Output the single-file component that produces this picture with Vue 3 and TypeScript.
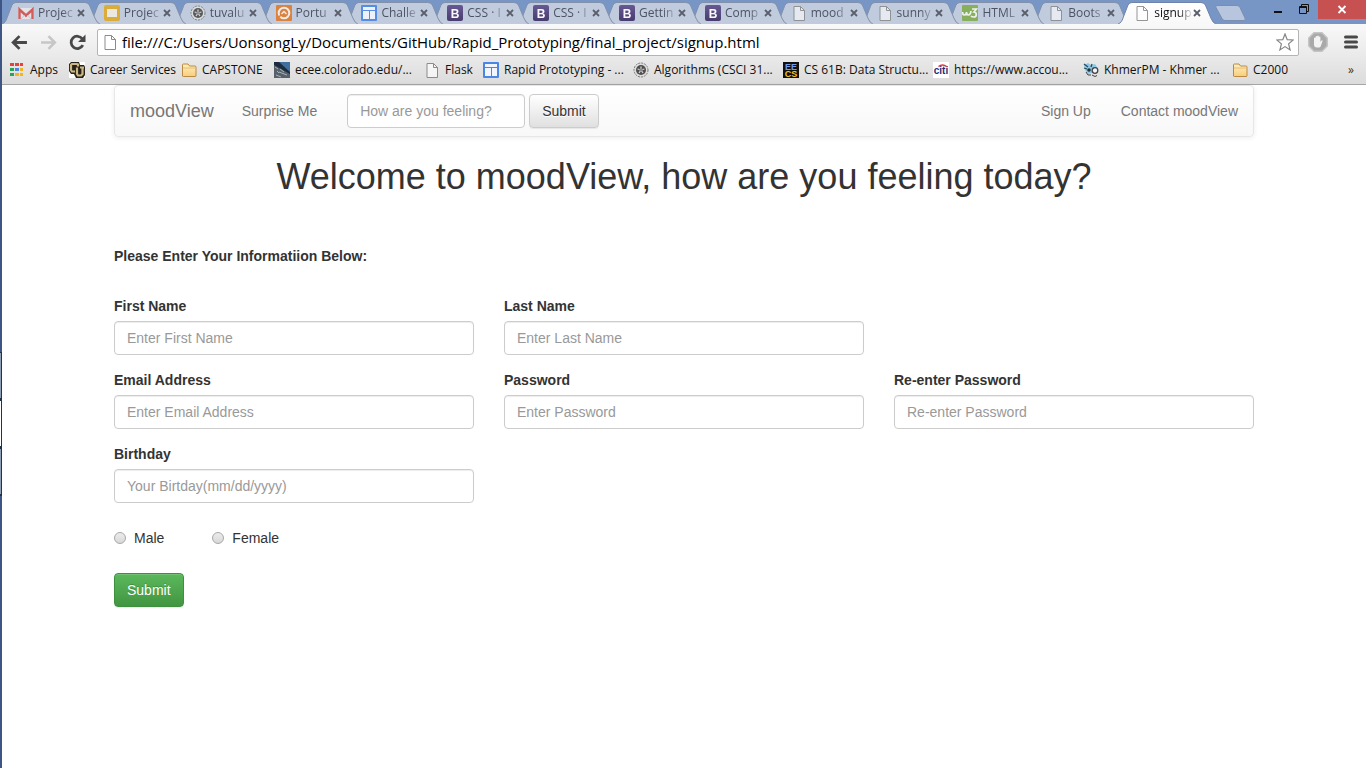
<script setup lang="ts">
import { ref } from 'vue'

interface Tab { icon: string; title: string; active?: boolean }
interface Bookmark { icon: string; label: string; width: number }
interface Field { id: string; label: string; hint: string; type: string }

const tabs: Tab[] = [
  { icon: 'gmail', title: 'Projec' },
  { icon: 'slides', title: 'Projec' },
  { icon: 'seal', title: 'tuvalu' },
  { icon: 'orange', title: 'Portu' },
  { icon: 'sites', title: 'Challe' },
  { icon: 'boot', title: 'CSS · I' },
  { icon: 'boot', title: 'CSS · I' },
  { icon: 'boot', title: 'Gettin' },
  { icon: 'boot', title: 'Comp' },
  { icon: 'page', title: 'mood' },
  { icon: 'page', title: 'sunny' },
  { icon: 'w3', title: 'HTML' },
  { icon: 'page', title: 'Boots' },
  { icon: 'page', title: 'signup', active: true },
]

const bookmarks: Bookmark[] = [
  { icon: 'apps', label: 'Apps', width: 60 },
  { icon: 'cu', label: 'Career Services', width: 112 },
  { icon: 'folder', label: 'CAPSTONE', width: 93 },
  { icon: 'photo', label: 'ecee.colorado.edu/...', width: 150 },
  { icon: 'page', label: 'Flask', width: 59 },
  { icon: 'sites', label: 'Rapid Prototyping - ...', width: 150 },
  { icon: 'seal', label: 'Algorithms (CSCI 31...', width: 150 },
  { icon: 'eecs', label: 'CS 61B: Data Structu...', width: 150 },
  { icon: 'citi', label: 'https://www.accou...', width: 150 },
  { icon: 'khmer', label: 'KhmerPM - Khmer ...', width: 149 },
  { icon: 'folder', label: 'C2000', width: 60 },
]

const rows: Field[][] = [
  [
    { id: 'first', label: 'First Name', hint: 'Enter First Name', type: 'text' },
    { id: 'last', label: 'Last Name', hint: 'Enter Last Name', type: 'text' },
  ],
  [
    { id: 'email', label: 'Email Address', hint: 'Enter Email Address', type: 'email' },
    { id: 'password', label: 'Password', hint: 'Enter Password', type: 'password' },
    { id: 'password2', label: 'Re-enter Password', hint: 'Re-enter Password', type: 'password' },
  ],
  [{ id: 'birthday', label: 'Birthday', hint: 'Your Birtday(mm/dd/yyyy)', type: 'text' }],
]

const url = ref('file:///C:/Users/UonsongLy/Documents/GitHub/Rapid_Prototyping/final_project/signup.html')
const gender = ref('')
</script>

<template>
  <div class="desktop">
    <svg class="gradients" aria-hidden="true">
      <defs>
        <linearGradient id="g-boot" x1="0" y1="0" x2="0" y2="1">
          <stop offset="0" stop-color="#5f4d8c" /><stop offset="1" stop-color="#3c2d63" />
        </linearGradient>
        <linearGradient id="g-folder" x1="0" y1="0" x2="0" y2="1">
          <stop offset="0" stop-color="#fff0c0" /><stop offset="1" stop-color="#f8cd7c" />
        </linearGradient>
        <linearGradient id="g-tab" x1="0" y1="0" x2="0" y2="1">
          <stop offset="0" stop-color="#ffffff" /><stop offset="1" stop-color="#f8f8f8" />
        </linearGradient>
      </defs>
    </svg>
    <svg class="sprite" aria-hidden="true">
      <symbol id="i-gmail" viewBox="0 0 16 16">
        <rect x="0" y="3" width="16" height="11" fill="#e8e6ea" />
        <path d="M1.500 14V4.500L8 10.500l6.500-6V14" fill="none" stroke="#d2504e" stroke-width="2.400" />
        <path d="M3 14l3.500-4M13 14l-3.500-4" stroke="#c8c6cc" fill="none" />
      </symbol>
      <symbol id="i-slides" viewBox="0 0 16 16">
        <rect width="16" height="16" rx="2" fill="#dda928" />
        <rect x="3" y="4" width="10" height="8" fill="#f0ece4" />
      </symbol>
      <symbol id="i-seal" viewBox="0 0 16 16">
        <circle cx="8" cy="8" r="7" fill="#ddd" stroke="#777" stroke-dasharray="2 1" />
        <circle cx="8" cy="8" r="5" fill="#4e4e4e" />
        <path d="M8 8V4.500M8 8l3.400-1M8 8l2 3M8 8l-2 3M8 8L4.600 7" stroke="#d5d5d5" stroke-width="1.300" />
        <circle cx="8" cy="8" r="1.800" fill="#888" />
      </symbol>
      <symbol id="i-orange" viewBox="0 0 16 16">
        <rect width="16" height="16" rx="1" fill="#e07b2e" />
        <circle cx="8" cy="8" r="5.300" fill="none" stroke="#f4efe9" stroke-width="2" />
        <path d="M5.500 9L8 6.500 10.500 9" fill="none" stroke="#f4efe9" stroke-width="1.500" />
        <path d="M2.500 12.500l3-3" stroke="#e07b2e" stroke-width="1.500" />
      </symbol>
      <symbol id="i-sites" viewBox="0 0 16 16">
        <rect width="16" height="16" rx="1" fill="#4a86e8" />
        <path d="M2 2h12v3H2zM2 6h6v8H2zM9 6h5v8H9z" fill="#f1f6fe" />
      </symbol>
      <symbol id="i-boot" viewBox="0 0 16 16">
        <rect width="16" height="16" rx="2" fill="url(#g-boot)" />
        <text x="8" y="12.500" text-anchor="middle" font-family="Liberation Sans, sans-serif" font-weight="bold" font-size="12" fill="#fff">B</text>
      </symbol>
      <symbol id="i-page" viewBox="0 0 16 16">
        <path d="M3 1.500h6.500l4 4v10H3z" fill="#fff" fill-opacity=".65" stroke="#8b8b8b" />
        <path d="M9.500 1.500v4h4" fill="none" stroke="#8b8b8b" />
      </symbol>
      <symbol id="i-w3" viewBox="0 0 16 16">
        <rect width="16" height="16" rx="1" fill="#82ad50" />
        <path d="M0.500 7q0 3 2 3t2-3q0 3 2 3t2.500-4M10 4h4.500l-2.500 3c3 0 3 5 0 5-1 0-2 0-3-1" fill="none" stroke="#f3f7ee" stroke-width="1.700" />
      </symbol>
      <symbol id="i-apps" viewBox="0 0 16 16">
        <path d="M1 1h4v3H1zM6 1h4v3H6zM11 1h3v3h-3z" fill="#e8433a" />
        <path d="M1 6h4v3H1zM1 11h4v3H1z" fill="#26a45a" />
        <path d="M6 6h4v3H6z" fill="#4a86e8" />
        <path d="M11 6h3v3h-3zM6 11h4v3H6zM11 11h3v3h-3z" fill="#f2b51d" />
      </symbol>
      <symbol id="i-cu" viewBox="0 0 16 16">
        <rect width="16" height="16" fill="#fff" />
        <path d="M2 0h8l1 3h4l1 2v8l-2 3H7l-2-4H2L0 9V2z" fill="#26221a" />
        <path d="M9 4.500V2.500L8 2H3L2 3v5l1 1.500h3M8 5.500v6.500l1 1.500h3l1.500-1.500V5.500M11 5.500h4" fill="none" stroke="#cdb885" stroke-width="2.200" />
      </symbol>
      <symbol id="i-folder" viewBox="0 0 16 16">
        <path d="M1.500 14V3q0-1 1-1H7l1.500 2h5.500q1 0 1 1v9q0 .5-1 .5H2.500q-1 0-1-.5z" fill="url(#g-folder)" stroke="#b98a43" />
        <path d="M2 6h12.500" stroke="#e8bd73" />
      </symbol>
      <symbol id="i-photo" viewBox="0 0 16 16">
        <rect width="16" height="16" fill="#1d2c3d" />
        <path d="M5 0h11v10z" fill="#416f9d" />
        <path d="M0 3l16 9v4H0z" fill="#56616b" />
        <path d="M1 5l3 2M5 10l8 3M2 13l5 2M6 7l4 3M3 9l2 2" stroke="#a9b2b8" />
      </symbol>
      <symbol id="i-eecs" viewBox="0 0 16 16">
        <rect width="16" height="16" fill="#10100e" />
        <text x="8" y="7.500" text-anchor="middle" font-family="Liberation Sans, sans-serif" font-weight="bold" font-size="9" fill="#6f9cf0">EE</text>
        <text x="8" y="15" text-anchor="middle" font-family="Liberation Sans, sans-serif" font-weight="bold" font-size="9" fill="#f4c51e">CS</text>
      </symbol>
      <symbol id="i-citi" viewBox="0 0 16 16">
        <rect width="16" height="16" fill="#fff" />
        <text x="8" y="12" text-anchor="middle" font-family="Liberation Sans, sans-serif" font-weight="bold" font-size="10" fill="#1c2e78">citi</text>
        <path d="M5.500 4.500q4-3 8 0" fill="none" stroke="#e02f35" stroke-width="1.500" />
      </symbol>
      <symbol id="i-khmer" viewBox="0 0 16 16">
        <path d="M1 3l4-2 3 2 4-1 2 3-1 3-4 3-4 1-3-4z" fill="#8ec8e6" />
        <path d="M1 2l4 3M1 6l3 1M9 2L8 5" stroke="#2c4a5c" stroke-width="1.300" />
        <circle cx="6" cy="8" r="1.800" fill="#222f3a" />
        <circle cx="12" cy="8.500" r="2.800" fill="#eef5f9" stroke="#444" stroke-width="1.300" />
        <path d="M3 10l2 3 3 0M9 13l3 1.500 2-1" stroke="#444" fill="none" />
      </symbol>
    </svg>

    <div class="edge" aria-hidden="true">
      <span class="seg gap"></span><span class="seg pane"></span><span class="seg lit"></span><span class="seg pane"></span>
    </div>

    <div class="window">
      <header class="titlebar">
        <nav class="tabs" aria-label="Open tabs">
          <div
            v-for="(tab, i) in tabs"
            :key="i"
            class="tab"
            :class="{ active: tab.active }"
            :style="{ zIndex: tab.active ? 30 : tabs.length - i }"
          >
            <svg class="tab-shape" viewBox="0 0 100 24" preserveAspectRatio="none">
              <path d="M0 24C3 23 4 21 5 18L10 5Q11.500 2.500 14 2.500H83Q86 2.500 87.500 5L93 18Q95 23 98 24" />
            </svg>
            <svg class="icon"><use :href="'#i-' + tab.icon" /></svg>
            <button class="tab-title" type="button">{{ tab.title }}</button>
            <button class="tab-close" type="button" aria-label="Close tab">
              <svg viewBox="0 0 8 8"><path d="M1 1l6 6M7 1L1 7" /></svg>
            </button>
          </div>
        </nav>
        <button class="new-tab" type="button" aria-label="New tab">
          <svg viewBox="0 0 34 18"><path d="M3 1.500H23Q25 1.500 26 3.500L31 14Q32 16.500 30 16.500H11Q9 16.500 8 14.500L2 3.500Q1 1.500 3 1.500Z" /></svg>
        </button>
        <div class="controls">
          <button type="button" aria-label="Minimize"><svg viewBox="0 0 12 20"><path d="M2 12h8" stroke="#111" stroke-width="2" /></svg></button>
          <button type="button" aria-label="Restore">
            <svg viewBox="0 0 12 20"><path d="M3.500 6V4.500h7v7H9" fill="none" stroke="#111" /><path d="M1.500 6.500h7v7h-7zM1.500 7.500h7" fill="none" stroke="#111" /></svg>
          </button>
          <button class="close" type="button" aria-label="Close"><svg viewBox="0 0 12 20"><path d="M2.500 6l7 7M9.500 6l-7 7" stroke="#fff" stroke-width="1.800" /></svg></button>
        </div>
      </header>

      <div class="toolbar">
        <button class="tool" type="button" aria-label="Back">
          <svg viewBox="0 0 16 16"><path d="M15 8H2.500M8 2L2 8l6 6" fill="none" stroke="#484848" stroke-width="2.600" /></svg>
        </button>
        <button class="tool" type="button" aria-label="Forward">
          <svg viewBox="0 0 16 16"><path d="M1 8h12.500M8 2l6 6-6 6" fill="none" stroke="#c6c6c6" stroke-width="2.400" /></svg>
        </button>
        <button class="tool" type="button" aria-label="Reload">
          <svg viewBox="0 0 16 16"><path d="M13 10.500A5.800 5.800 0 1 1 12.500 4.500" fill="none" stroke="#484848" stroke-width="2.600" /><path d="M15.500 0.500V7.500H8.500z" fill="#484848" /></svg>
        </button>
        <div class="omnibox">
          <svg class="icon"><use href="#i-page" /></svg>
          <input v-model="url" type="text" aria-label="Address" spellcheck="false" />
          <button class="star" type="button" aria-label="Bookmark this page">
            <svg viewBox="0 0 18 18"><path d="M9 1l2.200 5.600 6 .4-4.600 3.900 1.500 6L9 13.600l-5.100 3.300 1.500-6L.8 7l6-.4z" fill="#fff" stroke="#858585" stroke-width="1.200" /></svg>
          </button>
        </div>
        <button class="ext" type="button" aria-label="Ad blocker">
          <svg viewBox="0 0 20 20">
            <path d="M6 .8h8L19.200 6v8L14 19.200H6L.8 14V6z" fill="#a9a9a9" stroke="#c4c4c4" stroke-width="1.500" />
            <path d="M6 10V6q.8-1 1.600 0v3.500V4.500q.8-1 1.600 0v4.500V4q.8-1 1.600 0v5V5q.8-1 1.600 0v5l1-1.500q1.200-.5 1.200.5l-2 5.500q-.5 1-1.500 1H9q-3 0-3-3z" fill="#f3f3f3" />
          </svg>
        </button>
        <button class="menu" type="button" aria-label="Menu">
          <svg viewBox="0 0 14 14"><path d="M1.500 2h11M1.500 7h11M1.500 12h11" stroke="#484848" stroke-width="3" stroke-linecap="round" /></svg>
        </button>
      </div>

      <nav class="bookmarks" aria-label="Bookmarks">
        <a v-for="mark in bookmarks" :key="mark.label" href="#" :style="{ width: mark.width + 'px' }">
          <svg class="icon"><use :href="'#i-' + mark.icon" /></svg>
          <span>{{ mark.label }}</span>
        </a>
        <button class="more" type="button" aria-label="More bookmarks">»</button>
      </nav>

      <main class="page">
        <nav class="navbar" aria-label="Main">
          <a class="brand" href="#">moodView</a>
          <a href="#">Surprise Me</a>
          <form class="search" @submit.prevent>
            <input class="control" type="text" placeholder="How are you feeling?" aria-label="How are you feeling?" />
            <button class="btn btn-default" type="submit">Submit</button>
          </form>
          <div class="right">
            <a href="#">Sign Up</a>
            <a href="#">Contact moodView</a>
          </div>
        </nav>

        <h1>Welcome to moodView, how are you feeling today?</h1>

        <form class="signup" @submit.prevent>
          <p class="lead">Please Enter Your Informatiion Below:</p>
          <div v-for="(row, r) in rows" :key="r" class="row">
            <div v-for="field in row" :key="field.id" class="field">
              <label :for="field.id">{{ field.label }}</label>
              <input :id="field.id" class="control" :type="field.type" :placeholder="field.hint" />
            </div>
          </div>
          <div class="radios">
            <label><input v-model="gender" type="radio" name="gender" value="male" />Male</label>
            <label><input v-model="gender" type="radio" name="gender" value="female" />Female</label>
          </div>
          <button class="btn btn-success" type="submit">Submit</button>
        </form>
      </main>
    </div>
  </div>
</template>

<style>
body {
  margin: 0;
  background: #fff;
}
</style>

<style scoped>
* {
  box-sizing: border-box;
}
button {
  font: inherit;
  padding: 0;
  border: 0;
  background: none;
}
svg {
  display: block;
}
a {
  text-decoration: none;
}
.desktop {
  display: flex;
  min-height: 100vh;
  overflow: hidden;
}
.gradients {
  position: absolute;
  width: 0;
  height: 0;
}
.sprite {
  display: none;
}
.edge {
  width: 2px;
  flex: none;
  background: #3f5684;
}
.seg {
  display: block;
  height: 48px;
  border: solid #22314f;
  border-width: 1px 1px 2px 0;
}
.seg.gap {
  height: 352px;
  border: 0;
}
.seg.pane {
  background: #8f9fb4;
}
.seg.lit {
  background: #fff;
}
.window {
  flex: 1;
  min-width: 0;
}
.icon {
  width: 16px;
  height: 16px;
  flex: none;
}

.titlebar {
  display: flex;
  height: 24px;
  background: #7795c5;
  font: 12px/16px "Open Sans", "Noto Sans", sans-serif;
}
.tabs {
  display: flex;
  flex: 0 1 1202px;
  min-width: 0;
}
.tab {
  position: relative;
  flex: 1;
  min-width: 0;
  display: flex;
  align-items: center;
  padding: 2px 3px 0 16px;
  color: #4c5363;
}
.tab-shape {
  position: absolute;
  top: 0;
  left: 0;
  width: calc(100% + 14px);
  height: 24px;
  fill: #c0cbdd;
  stroke: #8290aa;
}
.active .tab-shape {
  fill: url(#g-tab);
  stroke: #6e83aa;
}
.tab .icon {
  position: relative;
  opacity: 0.9;
}
.tab-title {
  position: relative;
  flex: 1;
  min-width: 0;
  margin-left: 4px;
  overflow: hidden;
  white-space: nowrap;
  text-align: left;
  color: inherit;
  mask-image: linear-gradient(to right, #000 65%, rgba(0, 0, 0, 0.15) 100%);
}
.active .tab-title {
  color: #111;
}
.tab-close {
  position: relative;
  width: 8px;
  height: 8px;
  margin-left: 2px;
}
.tab-close path {
  stroke: #5a5f6b;
  stroke-width: 1.8;
}
.new-tab {
  width: 34px;
  height: 18px;
  margin: 4px 0 0 10px;
}
.new-tab svg {
  width: 34px;
  height: 18px;
  fill: #b7c6de;
  stroke: #7c8eae;
}
.controls {
  display: flex;
  margin-left: auto;
}
.controls button {
  width: 26px;
  height: 20px;
  display: flex;
  justify-content: center;
}
.controls svg {
  width: 12px;
  height: 20px;
}
.controls .close {
  width: 48px;
  height: 19px;
  margin-left: 1px;
  background: #c75050;
}

.toolbar {
  display: flex;
  align-items: center;
  height: 33px;
  padding: 3px 8px 0 9px;
  background: linear-gradient(#f9f9f9, #e9e9e9);
}
.tool {
  width: 17px;
  height: 17px;
  margin-right: 12px;
}
.tool:nth-child(3) {
  margin-right: 11px;
}
.tool svg {
  width: 17px;
  height: 17px;
}
.omnibox {
  display: flex;
  align-items: center;
  flex: 1;
  min-width: 0;
  height: 27px;
  padding: 0 4px;
  border: 1px solid #b4b4b4;
  border-radius: 2px;
  background: #fff;
}
.omnibox input {
  flex: 1;
  min-width: 0;
  margin-left: 4px;
  padding: 0;
  border: 0;
  outline: 0;
  background: none;
  color: #000;
  font: 15px/22px "Open Sans", "Noto Sans", sans-serif;
}
.star svg {
  width: 18px;
  height: 18px;
}
.ext {
  margin: 0 16px 0 9px;
}
.ext svg {
  width: 20px;
  height: 20px;
}
.menu svg {
  width: 14px;
  height: 14px;
}

.bookmarks {
  display: flex;
  align-items: center;
  height: 28px;
  padding: 0 12px 2px 7px;
  border-bottom: 1px solid #a6a6a6;
  background: linear-gradient(#e9e9e9, #dcdcdc);
  font: 12px/16px "Open Sans", "Noto Sans", sans-serif;
}
.bookmarks a {
  display: flex;
  align-items: center;
  gap: 5px;
  flex: none;
  color: #111;
  white-space: nowrap;
}
.more {
  margin-left: auto;
  color: #333;
}

.page {
  width: 100%;
  max-width: 1140px;
  margin: 0 auto;
  color: #333;
  font: 14px/20px "Liberation Sans", Arial, sans-serif;
}
.navbar {
  display: flex;
  align-items: center;
  height: 52px;
  padding: 0 15px;
  border: 1px solid #e7e7e7;
  border-radius: 4px;
  background: linear-gradient(#fff, #f8f8f8);
  box-shadow: 0 1px 5px rgba(0, 0, 0, 0.075);
}
.navbar a {
  margin-right: 30px;
  color: #777;
}
.navbar .brand {
  margin-right: 28px;
  font-size: 18px;
}
.search {
  display: flex;
  gap: 4px;
}
.search .control {
  width: 178px;
}
.right {
  margin-left: auto;
}
.right a:last-child {
  margin-right: 0;
}
.control {
  display: block;
  width: 100%;
  height: 34px;
  padding: 6px 12px;
  border: 1px solid #ccc;
  border-radius: 4px;
  background: #fff;
  box-shadow: inset 0 1px 1px rgba(0, 0, 0, 0.075);
  color: #555;
  font: inherit;
}
.control::placeholder {
  color: #999;
}
.btn {
  height: 34px;
  padding: 6px 12px;
  border: 1px solid #ccc;
  border-radius: 4px;
}
.btn-default {
  background: linear-gradient(#fff, #e0e0e0);
  box-shadow: inset 0 1px 0 rgba(255, 255, 255, 0.15), 0 1px 1px rgba(0, 0, 0, 0.075);
  color: #333;
  text-shadow: 0 1px 0 #fff;
}
.btn-success {
  border-color: #3e8f3e;
  background: linear-gradient(#5cb85c, #419641);
  box-shadow: inset 0 1px 0 rgba(255, 255, 255, 0.15), 0 1px 1px rgba(0, 0, 0, 0.075);
  color: #fff;
  text-shadow: 0 -1px 0 rgba(0, 0, 0, 0.2);
}
h1 {
  margin: 20px 0 49px;
  font-size: 36px;
  font-weight: 400;
  line-height: 40px;
  text-align: center;
}
.lead {
  margin: 0 0 30px;
  font-weight: 700;
}
.row {
  display: grid;
  grid-template-columns: repeat(3, 1fr);
  gap: 30px;
  margin-bottom: 15px;
}
.field label {
  display: block;
  margin-bottom: 5px;
  font-weight: 700;
}
.radios {
  display: flex;
  gap: 48px;
  padding: 10px 0 25px;
}
.radios label {
  display: flex;
  align-items: center;
}
.radios input {
  appearance: none;
  width: 12px;
  height: 12px;
  margin: 0 8px 0 0;
  border: 1px solid #a8a8a8;
  border-radius: 50%;
  background: linear-gradient(#ececec, #d8d8d8);
}
.radios input:checked {
  background: radial-gradient(#444 40%, #e2e2e2 45%);
}
</style>
